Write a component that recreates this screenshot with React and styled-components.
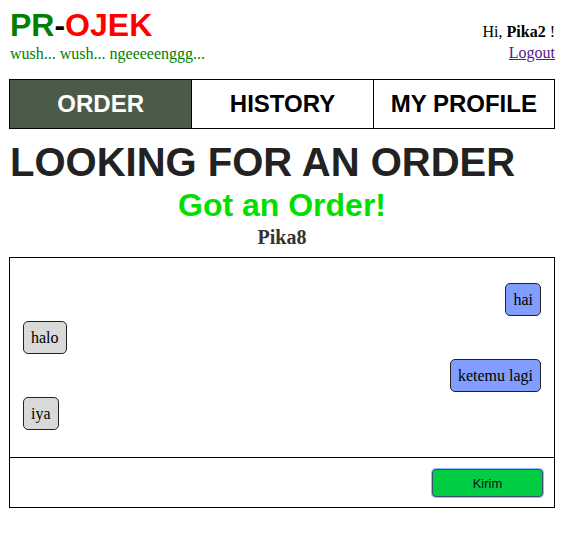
import React from "react";
import styled, { createGlobalStyle } from "styled-components";

const Global = createGlobalStyle`
  html, body { margin: 0; padding: 0; background: #fff; }
  body { font-family: "Liberation Serif", "Times New Roman", serif; font-size: 16px; color: #000; }
`;

const Page = styled.div`
  margin: 0 11px 0 9px;
`;

const Header = styled.header`
  display: flex;
  justify-content: space-between;
  align-items: flex-start;
  padding: 7px 0 0 1px;
  height: 79px;
  box-sizing: border-box;
`;

const Brand = styled.div`
  display: flex;
  flex-direction: column;
`;

const Logo = styled.div`
  font-family: "Liberation Sans", Arial, sans-serif;
  font-weight: bold;
  font-size: 32px;
  line-height: 37px;
`;

const Part = styled.span`
  color: ${(p) => p.$color};
`;

const Tagline = styled.div`
  color: #008000;
  font-size: 16px;
  line-height: 18px;
  margin-top: 1px;
`;

const User = styled.div`
  display: flex;
  flex-direction: column;
  align-items: flex-end;
  padding-top: 16px;
  line-height: 18px;
  gap: 3px;
`;

const Logout = styled.a`
  color: #551a8b;
  text-decoration: underline;
`;

const Nav = styled.nav`
  display: grid;
  grid-template-columns: repeat(3, 1fr);
  border: 1px solid #000;
  height: 50px;
  box-sizing: border-box;
`;

const Tab = styled.div`
  display: flex;
  align-items: center;
  justify-content: center;
  font-family: "Liberation Sans", Arial, sans-serif;
  font-weight: bold;
  font-size: 24px;
  background: ${(p) => (p.$active ? "#4b5b49" : "#fff")};
  color: ${(p) => (p.$active ? "#fff" : "#000")};
  & + & { border-left: 1px solid #000; }
`;

const Title = styled.h1`
  margin: 10px 0 0 1px;
  font-family: "Liberation Sans", Arial, sans-serif;
  font-weight: bold;
  font-size: 40px;
  line-height: 46px;
  color: #222;
`;

const Status = styled.h2`
  margin: 2px 0 0;
  text-align: center;
  font-family: "Liberation Sans", Arial, sans-serif;
  font-weight: bold;
  font-size: 32px;
  line-height: 37px;
  color: #00e000;
`;

const Partner = styled.div`
  text-align: center;
  font-weight: bold;
  font-size: 20px;
  line-height: 23px;
  color: #333;
  margin: 2px 0 8px;
`;

const Chat = styled.section`
  border: 1px solid #000;
  display: flex;
  flex-direction: column;
`;

const Messages = styled.div`
  display: flex;
  flex-direction: column;
  gap: 5px;
  padding: 25px 13px 26px 13px;
  height: 199px;
  box-sizing: border-box;
`;

const Bubble = styled.div`
  align-self: ${(p) => (p.$mine ? "flex-end" : "flex-start")};
  background: ${(p) => (p.$mine ? "#809dff" : "#d9d9d9")};
  border: 1px solid #222;
  border-radius: 5px;
  padding: 7px 7px;
  line-height: 17px;
  font-size: 16px;
`;

const Footer = styled.div`
  border-top: 1px solid #000;
  height: 49px;
  display: flex;
  justify-content: flex-end;
  align-items: center;
  padding: 0 11px 0 0;
`;

const SendButton = styled.button`
  width: 111px;
  height: 28px;
  background: #00cc44;
  border: 1px solid #3a5070;
  border-radius: 4px;
  box-shadow: 0 0 0 1px #9cb8ff;
  font-family: "Liberation Sans", Arial, sans-serif;
  font-size: 13px;
  color: #111;
  margin-top: 1px;
`;

const messages = [
  { text: "hai", mine: true },
  { text: "halo", mine: false },
  { text: "ketemu lagi", mine: true },
  { text: "iya", mine: false },
];

export default function App() {
  return (
    <>
      <Global />
      <Page>
        <Header>
          <Brand>
            <Logo>
              <Part $color="#008000">PR</Part>
              <Part $color="#000">-</Part>
              <Part $color="#ff0000">OJEK</Part>
            </Logo>
            <Tagline>wush... wush... ngeeeeenggg...</Tagline>
          </Brand>
          <User>
            <div>
              Hi, <b>Pika2</b> !
            </div>
            <Logout href="#">Logout</Logout>
          </User>
        </Header>
        <Nav>
          <Tab $active>ORDER</Tab>
          <Tab>HISTORY</Tab>
          <Tab>MY PROFILE</Tab>
        </Nav>
        <Title>LOOKING FOR AN ORDER</Title>
        <Status>Got an Order!</Status>
        <Partner>Pika8</Partner>
        <Chat>
          <Messages>
            {messages.map((m, i) => (
              <Bubble key={i} $mine={m.mine}>
                {m.text}
              </Bubble>
            ))}
          </Messages>
          <Footer>
            <SendButton>Kirim</SendButton>
          </Footer>
        </Chat>
      </Page>
    </>
  );
}
